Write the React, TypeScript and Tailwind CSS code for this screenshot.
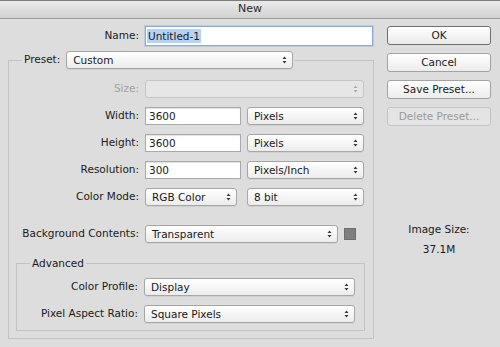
import clsx from "clsx";

const font = "font-['DejaVu_Sans',sans-serif] text-[10.5px] text-[#1a1a1a]";

const Arrows = ({ dim }: { dim?: boolean }) => (
  <svg width="5" height="8" viewBox="0 0 5 8" className="shrink-0">
    <path d="M2.5 0.5 L4.5 3 H0.5 Z M2.5 7.5 L4.5 5 H0.5 Z" fill={dim ? "#aaaaaa" : "#3a3a3a"} />
  </svg>
);

const Select = ({
  value,
  className,
  disabled,
}: {
  value?: string;
  className?: string;
  disabled?: boolean;
}) => (
  <div
    className={clsx(
      "flex h-[18px] shrink-0 items-center justify-between rounded-[3px] border pl-[6px] pr-[5px] leading-none",
      disabled
        ? "border-[#c6c6c6] bg-[#e6e6e6]"
        : "border-[#a6a6a6] bg-gradient-to-b from-[#ffffff] to-[#ececec] shadow-[0_1px_0_rgba(0,0,0,0.06)]",
      className
    )}
  >
    <span>{value}</span>
    <Arrows dim={disabled} />
  </div>
);

const Input = ({ value, className }: { value: string; className?: string }) => (
  <div
    className={clsx(
      "flex h-[18px] shrink-0 items-center border border-[#a9a9a9] bg-white pl-[3px] leading-none shadow-[inset_0_1px_1px_rgba(0,0,0,0.12)]",
      className
    )}
  >
    {value}
  </div>
);

const Button = ({ label, primary, disabled }: { label: string; primary?: boolean; disabled?: boolean }) => (
  <div
    className={clsx(
      "flex h-[19px] w-[104px] items-center justify-center rounded-[3px] border leading-none",
      primary && "border-[#6f6f6f] bg-gradient-to-b from-[#ffffff] to-[#e9e9e9]",
      !primary && !disabled && "border-[#a3a3a3] bg-gradient-to-b from-[#ffffff] to-[#ececec]",
      disabled && "border-[#c4c4c4] bg-[#e4e4e4] text-[#9a9a9a]"
    )}
  >
    {label}
  </div>
);

export default function App() {
  return (
    <div className={clsx("flex h-[347px] w-[500px] flex-col overflow-hidden bg-[#dddddd]", font)}>
      {/* title bar */}
      <div className="flex h-[19px] shrink-0 items-center justify-center border-t border-b border-t-[#7d7d7d] border-b-[#9c9c9c] bg-gradient-to-b from-[#e9e9e9] to-[#d2d2d2] text-[11px] text-[#2a2a2a]">
        New
      </div>

      <div className="flex pl-[8px] pt-[7px]">
        {/* left side */}
        <div className="flex w-[366px] flex-col">
          <div className="flex items-center gap-[6px]">
            <span className="w-[131px] text-right">Name:</span>
            <div className="flex h-[20px] w-[228px] items-center border border-[#89abd6] bg-white pl-[1px] shadow-[0_0_0_1px_rgba(130,170,220,0.35)]">
              <span className="bg-[#b6d3f7] px-[1px] py-[2px] leading-none">Untitled-1</span>
            </div>
          </div>

          <fieldset className="mt-[5px] flex flex-col border border-[#c3c3c3] pb-[7px] pt-[11px]">
            <legend className="ml-[13px] px-[2px]">
              <div className="flex items-center gap-[6px]">
                <span>Preset:</span>
                <Select value="Custom" className="w-[227px]" />
              </div>
            </legend>

            <div className="flex flex-col gap-[9px]">
              <div className="flex items-center gap-[6px]">
                <span className="w-[130px] text-right text-[#a3a3a3]">Size:</span>
                <Select disabled className="w-[219px]" />
              </div>
              <div className="flex items-center gap-[6px]">
                <span className="w-[130px] text-right">Width:</span>
                <Input value="3600" className="w-[96px]" />
                <Select value="Pixels" className="w-[117px]" />
              </div>
              <div className="flex items-center gap-[6px]">
                <span className="w-[130px] text-right">Height:</span>
                <Input value="3600" className="w-[96px]" />
                <Select value="Pixels" className="w-[117px]" />
              </div>
              <div className="flex items-center gap-[6px]">
                <span className="w-[130px] text-right">Resolution:</span>
                <Input value="300" className="w-[96px]" />
                <Select value="Pixels/Inch" className="w-[117px]" />
              </div>
              <div className="flex items-center gap-[6px]">
                <span className="w-[130px] text-right">Color Mode:</span>
                <Select value="RGB Color" className="w-[92px]" />
                <Select value="8 bit" className="ml-[4px] w-[117px]" />
              </div>
            </div>

            <div className="mt-[19px] flex items-center gap-[6px]">
              <span className="w-[130px] text-right">Background Contents:</span>
              <Select value="Transparent" className="w-[193px]" />
              <div className="h-[12px] w-[12px] border border-[#6e6e6e] bg-[#7f7f7f]" />
            </div>

            <fieldset className="ml-[7px] mr-[8px] mt-[13px] flex flex-col gap-[9px] border border-[#c3c3c3] pb-[7px] pt-[6px]">
              <legend className="ml-[13px] px-[2px]">Advanced</legend>
              <div className="flex items-center gap-[6px]">
                <span className="w-[121px] text-right">Color Profile:</span>
                <Select value="Display" className="w-[211px]" />
              </div>
              <div className="flex items-center gap-[6px]">
                <span className="w-[121px] text-right">Pixel Aspect Ratio:</span>
                <Select value="Square Pixels" className="w-[211px]" />
              </div>
            </fieldset>
          </fieldset>
        </div>

        {/* right side */}
        <div className="ml-[13px] flex w-[104px] flex-col">
          <div className="flex flex-col gap-[8px]">
            <Button label="OK" primary />
            <Button label="Cancel" />
            <Button label="Save Preset..." />
            <Button label="Delete Preset..." disabled />
          </div>
          <div className="mt-[97px] flex flex-col items-center gap-[7px] leading-[13px]">
            <span>Image Size:</span>
            <span>37.1M</span>
          </div>
        </div>
      </div>
    </div>
  );
}
